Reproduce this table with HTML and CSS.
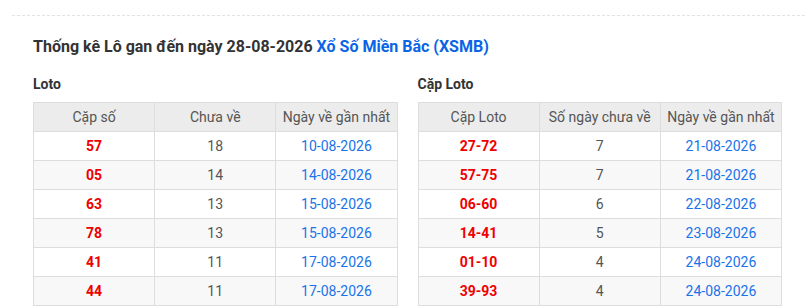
FILE: index.html
```html
<!DOCTYPE html>
<html lang="vi">
<head>
<meta charset="utf-8">
<title>Thống kê Lô gan</title>
<link rel="stylesheet" href="styles.css">
</head>
<body>
<div class="wrap">
  <div class="content">
    <h2 class="title">Thống kê Lô gan đến ngày 28-08-2026 <a class="link">Xổ Số Miền Bắc (XSMB)</a></h2>
    <div class="grid">
      <section>
        <h3 class="label">Loto</h3>
        <table class="tbl">
          <thead><tr><th>Cặp số</th><th>Chưa về</th><th>Ngày về gần nhất</th></tr></thead>
          <tbody>
            <tr><td class="num">57</td><td>18</td><td class="date">10-08-2026</td></tr>
            <tr><td class="num">05</td><td>14</td><td class="date">14-08-2026</td></tr>
            <tr><td class="num">63</td><td>13</td><td class="date">15-08-2026</td></tr>
            <tr><td class="num">78</td><td>13</td><td class="date">15-08-2026</td></tr>
            <tr><td class="num">41</td><td>11</td><td class="date">17-08-2026</td></tr>
            <tr><td class="num">44</td><td>11</td><td class="date">17-08-2026</td></tr>
          </tbody>
        </table>
      </section>
      <section>
        <h3 class="label">Cặp Loto</h3>
        <table class="tbl">
          <thead><tr><th>Cặp Loto</th><th>Số ngày chưa về</th><th>Ngày về gần nhất</th></tr></thead>
          <tbody>
            <tr><td class="num">27-72</td><td>7</td><td class="date">21-08-2026</td></tr>
            <tr><td class="num">57-75</td><td>7</td><td class="date">21-08-2026</td></tr>
            <tr><td class="num">06-60</td><td>6</td><td class="date">22-08-2026</td></tr>
            <tr><td class="num">14-41</td><td>5</td><td class="date">23-08-2026</td></tr>
            <tr><td class="num">01-10</td><td>4</td><td class="date">24-08-2026</td></tr>
            <tr><td class="num">39-93</td><td>4</td><td class="date">24-08-2026</td></tr>
          </tbody>
        </table>
      </section>
    </div>
  </div>
</div>
</body>
</html>
```
FILE: styles.css
```css
html, body {
  margin: 0;
  padding: 0;
  background: #fff;
  font-family: Roboto, "Noto Sans", Arial, sans-serif;
  color: #333;
}
.wrap {
  margin: 15px 0 0 12px;
  border-top: 1px dashed #e3e3e3;
}
.content {
  padding: 0 23px 0 21px;
}
.title {
  margin: 0;
  padding-top: 19px;
  font-size: 16px;
  line-height: 24px;
  font-weight: 700;
  color: #333;
}
.link {
  color: #0b63e5;
}
.grid {
  display: grid;
  grid-template-columns: 1fr 1fr;
  column-gap: 20px;
  margin-top: 16px;
}
.label {
  margin: 0 0 9px 0;
  font-size: 14px;
  line-height: 18px;
  font-weight: 700;
  color: #333;
}
.tbl {
  width: 100%;
  border-collapse: collapse;
  table-layout: fixed;
  font-size: 14px;
}
.tbl th, .tbl td {
  border: 1px solid #ddd;
  text-align: center;
  height: 28px;
  padding: 0;
  line-height: 28px;
}
.tbl th {
  background: #ececec;
  font-weight: 400;
  color: #555;
}
.tbl td {
  color: #555;
}
.tbl tbody tr:nth-child(even) td {
  background: #f8f8f8;
}
.tbl td.num {
  color: #e00;
  font-weight: 700;
}
.tbl td.date {
  color: #1a73e8;
}
```
